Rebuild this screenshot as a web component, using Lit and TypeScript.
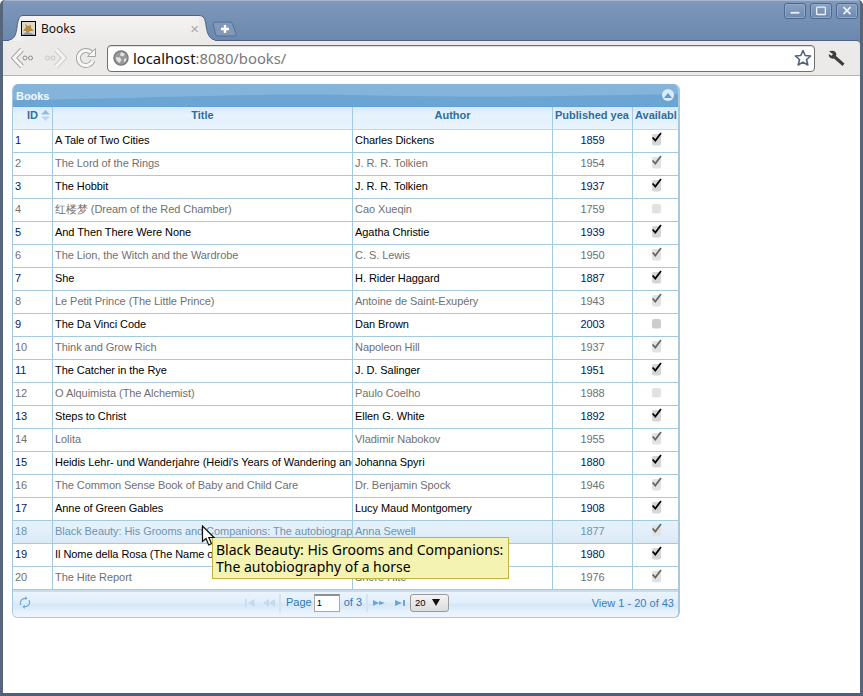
import { LitElement, html, css, svg } from "lit";
import { customElement } from "lit/decorators.js";

type Book = [string, string, string, number];
const BOOKS: Book[] = [
  ["A Tale of Two Cities", "Charles Dickens", "1859", 1],
  ["The Lord of the Rings", "J. R. R. Tolkien", "1954", 1],
  ["The Hobbit", "J. R. R. Tolkien", "1937", 1],
  ["红楼梦 (Dream of the Red Chamber)", "Cao Xueqin", "1759", 0],
  ["And Then There Were None", "Agatha Christie", "1939", 1],
  ["The Lion, the Witch and the Wardrobe", "C. S. Lewis", "1950", 1],
  ["She", "H. Rider Haggard", "1887", 1],
  ["Le Petit Prince (The Little Prince)", "Antoine de Saint-Exupéry", "1943", 1],
  ["The Da Vinci Code", "Dan Brown", "2003", 0],
  ["Think and Grow Rich", "Napoleon Hill", "1937", 1],
  ["The Catcher in the Rye", "J. D. Salinger", "1951", 1],
  ["O Alquimista (The Alchemist)", "Paulo Coelho", "1988", 0],
  ["Steps to Christ", "Ellen G. White", "1892", 1],
  ["Lolita", "Vladimir Nabokov", "1955", 1],
  ["Heidis Lehr- und Wanderjahre (Heidi's Years of Wandering and Learning)", "Johanna Spyri", "1880", 1],
  ["The Common Sense Book of Baby and Child Care", "Dr. Benjamin Spock", "1946", 1],
  ["Anne of Green Gables", "Lucy Maud Montgomery", "1908", 1],
  ["Black Beauty: His Grooms and Companions: The autobiography of a horse", "Anna Sewell", "1877", 1],
  ["Il Nome della Rosa (The Name of the Rose)", "Umberto Eco", "1980", 1],
  ["The Hite Report", "Shere Hite", "1976", 1],
];

@customElement("app-root")
export class AppRoot extends LitElement {
  static styles = css`
    :host { display: block; width: 863px; height: 696px; overflow: hidden; background: #fff; font-family: "Liberation Sans", Arial, sans-serif; position: relative; }
    .window { height: 696px; box-sizing: border-box; display: flex; flex-direction: column; background: linear-gradient(#7f98bb, #6b88ae 40px); border-left: 3px solid #56657b; border-right: 3px solid #56657b; border-bottom: 3px solid #4c5f7b; border-radius: 5px 5px 0 0; box-shadow: inset 0 1px 0 #a4b6cf; }
    .titlebar { height: 40px; flex: none; display: flex; align-items: flex-start; position: relative; }
    .tab { margin: 15px 0 0 6px; width: 206px; height: 26px; display: flex; position: relative; z-index: 1; }
    .tab svg { flex: none; display: block; }
    .tab-mid { flex: 1; min-width: 0; background: linear-gradient(#f4f3f1, #ebeae8); border-top: 1px solid #4e6283; display: flex; align-items: center; box-sizing: border-box; padding-bottom: 1px; }
    .favicon { width: 15px; height: 15px; border: 1px solid #000; background: #dcd8c8; display: block; margin-right: 5px; flex: none; margin-left: -2px; box-sizing: border-box; }
    .tab-title { font: 12px "Noto Sans", sans-serif; color: #111; flex: 1; }
    .tab-close { color: #a9a9a9; font-size: 15px; line-height: 1; }
    .newtab { margin: 21px 0 0 -3px; display: block; flex: none; }
    .winbtns { margin: 3px 2px 0 auto; display: flex; gap: 4px; }
    .winbtn { width: 22px; height: 16px; display: block; border: 1px solid #4e678d; border-radius: 3px; background: linear-gradient(#8aa2c3, #6c89b0); box-sizing: border-box; box-shadow: inset 0 0 0 1px #93a9c8; }
    .toolbar { height: 36px; flex: none; box-sizing: border-box; background: #ebeae8; border-top: 1px solid #4e6283; border-bottom: 1px solid #b5b5b3; border-radius: 0 4px 0 0; display: flex; align-items: center; padding-left: 8px; }
    .toolbar svg { display: block; flex: none; }
    .back { margin-right: 9px; }
    .fwd { margin-right: 9px; }
    .reload { margin-right: 10px; }
    .omnibox { width: 708px; height: 27px; box-sizing: border-box; background: #fff; border: 1px solid #6f6f6d; border-radius: 4px; display: flex; align-items: center; padding: 0 2px 0 5px; box-shadow: inset 0 1px 1px #ddd; }
    .url { font: 14.8px "Noto Sans", sans-serif; color: #111; margin-left: 4px; flex: 1; white-space: nowrap; }
    .url span { color: #7a7a7a; }
    .wrench { margin-left: 13px; }
    .page { flex: 1; background: #fff; padding: 8px 0 0 9px; }
    .grid { width: 668px; box-sizing: border-box; border: 1px solid #a6c9e2; border-right-width: 2px; border-top: 0; border-radius: 6px; font-size: 11px; overflow: hidden; letter-spacing: -0.06px; }
    .caption { height: 22px; background: #85b4da; color: #f3f8fc; font-weight: bold; font-size: 11px; position: relative; display: flex; align-items: center; justify-content: space-between; padding: 0 4px; margin: 0 -1px; overflow: hidden; }
    .caption .wave { position: absolute; left: 0; top: 0; }
    .caption span, .caption .collapse { position: relative; }
    .caption span { padding-top: 1px; }
    .collapse { width: 12px; height: 12px; border-radius: 50%; background: #dcebf7; margin-right: 1px; display: flex; align-items: center; justify-content: center; }
    .row { display: flex; box-sizing: border-box; height: 23px; border-bottom: 1px solid #a6c9e2; }
    .head { border-top: 1px solid #5ea4dc; background: linear-gradient(#d5e8f9, #e7f3fd 8px, #e4f1fc 14px, #eaf4fd); height: 24px; color: #2e6e9e; font-weight: bold; border-bottom-color: #bcd8ee; letter-spacing: 0; }
    .head .cell { justify-content: center; padding-bottom: 6px; box-sizing: border-box; overflow: hidden; }
    .cell { display: flex; align-items: center; border-right: 1px solid #a6c9e2; padding: 0 2px 2px; box-sizing: border-box; white-space: nowrap; overflow: hidden; flex: none; height: 100%; }
    .c1 { width: 40px; }
    .c2 { width: 300px; }
    .c3 { width: 200px; }
    .c4 { width: 80px; justify-content: center; }
    .c5 { width: 45px; border-right: 0; justify-content: center; }
    .c5 svg { margin-left: 3px; }
    .head .c4 { justify-content: flex-start; padding-left: 2px; }
    .head .c5 { justify-content: flex-start; padding-left: 2px; }
    .head .c1 { padding-left: 14px; justify-content: flex-start; gap: 3px; }
    .row.odd { color: #000; }
    .row.even { color: #707070; }
    .row.odd .navy { color: #06205c; }
    .row.hover { background: linear-gradient(#e6f1fa, #e1eef9 60%, #d9e9f6); color: #6d94b4; }
    .pager { height: 27px; box-sizing: border-box; border-top: 2px solid #c7ddef; padding-bottom: 4px; background: linear-gradient(#eaf4fd, #e2effb 40%, #d6e7f7 50%, #e4f0fb 75%, #edf6fd); color: #2e78b8; display: flex; align-items: center; letter-spacing: 0; }
    .pager svg { display: block; flex: none; }
    .refresh { margin-left: 6px; }
    .pcenter { display: flex; align-items: center; margin-left: 214px; }
    .psep { width: 2px; height: 18px; background: #d3e3f1; margin: 0 4px; flex: none; }
    .psep.wide { margin-right: 5px; }
    .plabel { padding-bottom: 2px; }
    .pinput { width: 26px; height: 18px; box-sizing: border-box; background: #fff; border: 1px solid #a8a8a8; border-top: 2px solid #8f8f8f; font-size: 9.5px; color: #000; padding: 1px 0 0 2px; margin: 0 4px 0 2px; }
    .pselect { width: 39px; height: 18px; box-sizing: border-box; border: 1px solid #9a9a9a; border-radius: 3px; background: linear-gradient(#f4f4f4, #dcdcdc); color: #000; font-size: 9.5px; display: flex; align-items: center; justify-content: space-between; padding: 0 8px 0 4px; margin-left: 5px; }
    .pview { margin-left: auto; margin-right: 4px; color: #3a7fbb; }
    .tip { position: absolute; left: 212px; top: 537px; width: 297px; height: 42px; box-sizing: border-box; background: #f5f3b1; border: 1px solid #bdb53e; padding: 3px; font: 14px/17px "Noto Sans", sans-serif; color: #000; white-space: nowrap; }
    .cursor { position: absolute; left: 201px; top: 525px; display: block; }
  `;

  private box(on: number, dark: boolean, unchecked: string) {
    return svg`<svg width="16" height="16" viewBox="0 0 16 16">
      ${on
        ? svg`<rect x="3" y="2" width="9" height="11.500" rx="2" fill="${dark ? "#d6d6d6" : "#e2e2e2"}"/>
              <path d="M3.600 5.500 L6.300 8.500 L12 1" fill="none" stroke="${dark ? "#000" : "#666"}" stroke-width="1.800"/>`
        : svg`<rect x="3" y="3" width="9" height="9.500" rx="2" fill="${unchecked}"/>`}
    </svg>`;
  }

  render() {
    return html`
      <div class="window">
        <div class="titlebar">
          <div class="tab">
            <svg width="14" height="26" viewBox="0 0 14 26"><path d="M0 26 V25 C6 24 7 19 8 12 C9 5 10 0.500 14 0.500 V26 Z" fill="#f1f0ee"/><path d="M0 25 C6 24 7 19 8 12 C9 5 10 0.500 14 0.500" fill="none" stroke="#4e6283"/></svg>
            <div class="tab-mid">
              <svg class="favicon" viewBox="0 0 13 13"><path d="M1 9 L4 5 L3 2 L6 4 L9 3 L9 6 L12 9 L8 9 L5 12 L4 9 Z" fill="#b98a38"/><path d="M0 13 L4 10 L9 11 L13 13 Z" fill="#8a94a8"/></svg>
              <span class="tab-title">Books</span>
              <span class="tab-close">×</span>
            </div>
            <svg width="16" height="26" viewBox="0 0 16 26"><path d="M0 0.500 C5 0.500 6 4 7 10 C8 18 10 24 16 25 V26 H0 Z" fill="#ebeae8"/><path d="M0 0.500 C5 0.500 6 4 7 10 C8 18 10 24 16 25" fill="none" stroke="#4e6283"/></svg>
          </div>
          <svg class="newtab" width="26" height="16" viewBox="0 0 26 16"><path d="M3 1 H18 Q20 1 21 4 L24 13 Q24.500 15 22 15 H6 Q4 15 3.500 13 L1 3 Q1 1 3 1 Z" fill="#7f98bb" stroke="#56708f"/><path d="M13 4 V12 M9 8 H17" stroke="#fff" stroke-width="2.400"/></svg>
          <div class="winbtns">
            <svg class="winbtn" viewBox="0 0 22 16"><rect x="6" y="9" width="10" height="2" fill="#eef2f7"/></svg>
            <svg class="winbtn" viewBox="0 0 22 16"><rect x="6" y="3.500" width="10" height="8.500" rx="1" fill="none" stroke="#eef2f7" stroke-width="1.500"/></svg>
            <svg class="winbtn" viewBox="0 0 22 16"><path d="M7 3.500 L15 11.500 M15 3.500 L7 11.500" stroke="#eef2f7" stroke-width="2"/></svg>
          </div>
        </div>
        <div class="toolbar">
          <svg class="back" width="24" height="22" viewBox="0 0 24 22"><path d="M11 2.500 L3 11 L11 19.500" fill="none" stroke="#a4a4a2" stroke-width="5"/><path d="M11 2.500 L3 11 L11 19.500" fill="none" stroke="#f8f8f7" stroke-width="3"/><circle cx="14" cy="11" r="2" fill="none" stroke="#8f8f8d"/><circle cx="19.500" cy="11" r="2" fill="none" stroke="#8f8f8d"/></svg>
          <svg class="fwd" width="23" height="22" viewBox="0 0 23 22"><path d="M12 2.500 L20 11 L12 19.500" fill="none" stroke="#cbcbc9" stroke-width="5"/><path d="M12 2.500 L20 11 L12 19.500" fill="none" stroke="#f4f4f3" stroke-width="3"/><circle cx="3.500" cy="11" r="2" fill="none" stroke="#c4c4c2"/><circle cx="9" cy="11" r="2" fill="none" stroke="#c4c4c2"/></svg>
          <svg class="reload" width="21" height="22" viewBox="0 0 21 22"><path d="M15.500 6 A7.500 7.500 0 1 0 17 13.500" fill="none" stroke="#a6a6a4" stroke-width="5"/><path d="M15.500 6 A7.500 7.500 0 1 0 17 13.500" fill="none" stroke="#f7f7f6" stroke-width="3"/><path d="M19.500 1.500 V9.500 H11.500 Z" fill="#f7f7f6" stroke="#a6a6a4"/></svg>
          <div class="omnibox">
            <svg width="16" height="16" viewBox="0 0 16 16"><circle cx="8" cy="8" r="7" fill="#9a9a9a" stroke="#7b7b7b" stroke-width="1.500"/><path d="M8 2 L12 4 L10 6.500 L7 5.500 Z M3 7 L7 7.500 L8.500 10 L6.500 13 L3.500 10.500 Z M11 9 L13.500 8 L13 11 L11 12.500 Z" fill="#e4e4e4"/></svg>
            <div class="url">localhost<span>:8080/books/</span></div>
            <svg width="18" height="18" viewBox="0 0 18 18"><path d="M9 1.500 L11.200 6.500 L16.700 7 L12.500 10.500 L13.800 16 L9 13.100 L4.200 16 L5.500 10.500 L1.300 7 L6.800 6.500 Z" fill="#fff" stroke="#53617a" stroke-width="1.600" stroke-linejoin="round"/></svg>
          </div>
          <svg class="wrench" width="18" height="17" viewBox="0 0 18 17"><path d="M1 1.500 Q5 0 7.500 2 Q9 4 8 6 L16.500 13.500 L14.500 16 L6 8.500 Q3.500 9 1.800 7.500 Q0.500 6 0.800 4 L3.500 5.800 L5 4 Z" fill="#3e3e3e"/></svg>
        </div>
        <div class="page">
          <div class="grid">
            <div class="caption">
              <svg class="wave" width="668" height="22" viewBox="0 0 668 22"><path d="M0 16 C120 15 220 9 340 11 C480 14 560 12 668 10 V22 H0 Z" fill="#6ca5d1"/></svg>
              <span>Books</span>
              <div class="collapse"><svg width="8" height="5" viewBox="0 0 8 5"><path d="M4 0 L8 5 H0 Z" fill="#5c9ccc"/></svg></div>
            </div>
            <div class="row head">
              <div class="cell c1">ID<svg width="9" height="11" viewBox="0 0 9 11"><path d="M4.500 0 L9 4.500 H0 Z" fill="#8fbde0"/><path d="M4.500 11 L9 6.500 H0 Z" fill="#b9d6ec"/></svg></div>
              <div class="cell c2">Title</div>
              <div class="cell c3">Author</div>
              <div class="cell c4">Published yea</div>
              <div class="cell c5">Availabl</div>
            </div>
            ${BOOKS.map((b, i) => {
              const odd = i % 2 === 0;
              const cls = `row ${i === 17 ? "hover" : odd ? "odd" : "even"}`;
              const unchecked = i === 8 ? "#cdcdcd" : "#e2e2e2";
              return html`<div class="${cls}">
                <div class="cell c1 navy">${i + 1}</div>
                <div class="cell c2">${b[0]}</div>
                <div class="cell c3">${b[1]}</div>
                <div class="cell c4 navy">${b[2]}</div>
                <div class="cell c5">${this.box(b[3], odd, unchecked)}</div>
              </div>`;
            })}
            <div class="pager">
              <svg class="refresh" width="12" height="13" viewBox="0 0 12 13"><path d="M2 9 A4.500 4.500 0 0 1 7 2.500 M10 4 A4.500 4.500 0 0 1 5 10.500" fill="none" stroke="#6fa8d6" stroke-width="1.200"/><path d="M6.500 0 L8.500 2.500 L6 4 Z M5.500 13 L3.500 10.500 L6 9 Z" fill="#6fa8d6"/></svg>
              <div class="pcenter">
                <svg width="10" height="8" viewBox="0 0 10 8"><path d="M0 0 H1.500 V8 H0 Z M9.500 0 V8 L3 4 Z" fill="#c3d9ec"/></svg>
                <svg style="margin-left:8px" width="12" height="8" viewBox="0 0 12 8"><path d="M6 0 V8 L0 4 Z M12 0 V8 L6 4 Z" fill="#c3d9ec"/></svg>
                <div class="psep wide"></div>
                <span class="plabel">Page</span>
                <div class="pinput">1</div>
                <span class="plabel">of 3</span>
                <div class="psep"></div>
                <svg style="margin-left:1px" width="12" height="8" viewBox="0 0 12 8"><path d="M0 1 V7 L6 4 Z M6 2 V6 L12 4 Z" fill="#6ba6d6"/></svg>
                <svg style="margin-left:10px" width="10" height="8" viewBox="0 0 10 8"><path d="M0 1 V7 L7 4 Z M8 1 H10 V7 H8 Z" fill="#6ba6d6"/></svg>
                <div class="pselect"><span>20</span><svg width="8" height="7" viewBox="0 0 8 7"><path d="M0 0 H8 L4 7 Z" fill="#111"/></svg></div>
              </div>
              <span class="pview">View 1 - 20 of 43</span>
            </div>
          </div>
        </div>
      </div>
      <div class="tip">Black Beauty: His Grooms and Companions:<br />The autobiography of a horse</div>
      <svg class="cursor" width="16" height="22" viewBox="0 0 16 22"><path d="M1.500 1 V16.500 L5 13.500 L7.700 20 L10.500 18.800 L7.800 12.500 H13 Z" fill="#fff" stroke="#111" stroke-width="1.200"/></svg>
    `;
  }
}
